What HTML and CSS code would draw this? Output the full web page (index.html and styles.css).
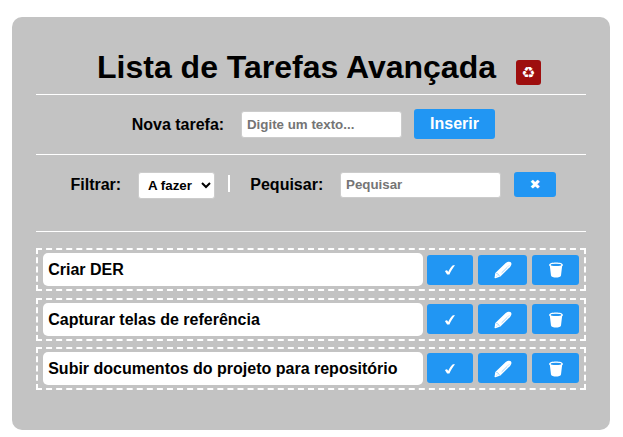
FILE: index.html
```html
<!DOCTYPE html>
<html lang="pt-BR">
<head>
<meta charset="utf-8">
<title>Lista de Tarefas Avançada</title>
<link rel="stylesheet" href="styles.css">
</head>
<body>
<svg class="sprite" width="0" height="0">
  <symbol id="pen" viewBox="0 0 18 18">
    <path d="M.5 16.900 1.300 11.900 11.700 2c1.900-1.600 4.200-1.700 5.100-.8 1 1 .9 2.900-.7 4.700L6.400 15.600 1.400 17.300z" fill="#fff"/>
    <path d="M2.300 12.400c1.500.2 2.700 1.300 3.100 2.900M7.600 11.900l5.800-5.700M14.100 5.500l1-1M2.300 15.500l.8-.8" fill="none" stroke="#2196f3" stroke-width=".45"/>
  </symbol>
  <symbol id="bin" viewBox="0 0 14 16">
    <path d="M.1 2.900C.1 1.200 3.200.4 7 .4s6.900.8 6.900 2.500c0 .6-.3 1-.8 1.300l-1.100 9.200c-.3 1.500-2.600 2-5 2s-4.700-.5-5-2L.9 4.200C.4 3.900.1 3.500.1 2.900z" fill="#fff"/>
    <ellipse cx="7" cy="2.900" rx="5.300" ry="1.100" fill="#2196f3"/>
  </symbol>
  <symbol id="check" viewBox="0 0 12 12">
    <path d="M1 7.300c.9-1.200 2.200-1.300 2.700-.3l.5.900C5.700 5 7.100 2.600 8.900 1.300h2.100C8.700 4.100 6.900 7.200 5.400 10.600H3.100z" fill="#fff"/>
  </symbol>
</svg>
<main class="container">
  <header class="heading">
    <h1>Lista de Tarefas Avançada</h1>
    <button class="btn recycle" aria-label="Limpar">♻</button>
  </header>
  <form class="new-task">
    <label for="task">Nova tarefa:</label>
    <input id="task" type="text" placeholder="Digite um texto...">
    <button class="btn insert" type="button">Inserir</button>
  </form>
  <section class="filters">
    <label for="filter">Filtrar:</label>
    <select id="filter"><option>A fazer</option></select>
    <span class="separator"></span>
    <label for="search">Pequisar:</label>
    <input id="search" type="text" placeholder="Pequisar">
    <button class="btn clear" aria-label="Limpar pesquisa">✖</button>
  </section>
  <ul class="tasks">
    <li class="task">
      <span class="name">Criar DER</span>
      <button class="btn check" aria-label="Concluir"><svg><use href="#check"/></svg></button>
      <button class="btn edit" aria-label="Editar"><svg><use href="#pen"/></svg></button>
      <button class="btn remove" aria-label="Excluir"><svg><use href="#bin"/></svg></button>
    </li>
    <li class="task">
      <span class="name">Capturar telas de referência</span>
      <button class="btn check" aria-label="Concluir"><svg><use href="#check"/></svg></button>
      <button class="btn edit" aria-label="Editar"><svg><use href="#pen"/></svg></button>
      <button class="btn remove" aria-label="Excluir"><svg><use href="#bin"/></svg></button>
    </li>
    <li class="task">
      <span class="name">Subir documentos do projeto para repositório</span>
      <button class="btn check" aria-label="Concluir"><svg><use href="#check"/></svg></button>
      <button class="btn edit" aria-label="Editar"><svg><use href="#pen"/></svg></button>
      <button class="btn remove" aria-label="Excluir"><svg><use href="#bin"/></svg></button>
    </li>
  </ul>
</main>
</body>
</html>
```
FILE: styles.css
```css
* { box-sizing: border-box; }

body {
  margin: 0;
  background: #fff;
  color: #000;
  font: bold 16px "Liberation Sans", Arial, sans-serif;
}

.sprite { display: block; }

.container {
  width: 598px;
  height: 413px;
  margin: 17px 0 0 12px;
  padding: 0 24px;
  border-radius: 10px;
  background: #c3c3c3;
}

.heading {
  display: flex;
  align-items: flex-start;
  height: 78px;
  padding-left: 61px;
  border-bottom: 1px solid #fff;
}

h1 {
  width: 399px;
  margin: 32px 20px 0 0;
  font-size: 32px;
  line-height: 37px;
  white-space: nowrap;
}

.btn {
  display: flex;
  align-items: center;
  justify-content: center;
  flex-shrink: 0;
  margin: 0;
  padding: 0;
  border: 0;
  border-radius: 3px;
  background: #2196f3;
  color: #fff;
  font: bold 16px "Liberation Sans", Arial, "DejaVu Sans", sans-serif;
}

.recycle {
  width: 25px;
  height: 25px;
  margin-top: 43px;
  background: #9e0e0e;
  font-size: 15.5px;
}

.new-task {
  display: flex;
  align-items: center;
  height: 60px;
  padding-left: 95.700px;
  border-bottom: 1px solid #fff;
}

label { flex-shrink: 0; white-space: nowrap; }

input, select {
  border: 1px solid #ccc;
  border-radius: 3px;
  background: #fff;
  color: #000;
  font: bold 13.333px "Liberation Sans", Arial, sans-serif;
}

input {
  width: 161px;
  height: 27px;
  padding: 0 5px;
}

.new-task label { width: 109.300px; }
.insert { width: 81px; height: 30px; margin: 0 0 1px 12px; }

.filters {
  display: flex;
  align-items: flex-start;
  height: 77px;
  padding: 17px 0 0 34px;
  border-bottom: 1px solid #fff;
}

.filters label { line-height: 26px; }
.filters label:first-child { width: 68px; padding-left: .5px; }
.filters label[for="search"] { width: 90px; padding-left: .3px; }
.filters input { height: 26px; padding-bottom: 1px; }

select {
  width: 77px;
  height: 27px;
  padding: 0 0 1px 5px;
}

.separator {
  width: 2px;
  height: 17px;
  margin: 3px 20px 0 13px;
  background: #fff;
}

.clear {
  width: 42px;
  height: 25px;
  margin-left: 13px;
  font-size: 13.333px;
}

.tasks {
  margin: 16px 0 0;
  padding: 0;
  list-style: none;
}

.task {
  display: flex;
  align-items: flex-start;
  height: 43px;
  margin-bottom: 6px;
  padding: 3px 5px;
  border: 2px dashed #fff;
}

.task:first-child { margin-bottom: 7px; }

.name {
  width: 380px;
  height: 33px;
  margin-right: 4px;
  padding-left: 5.2px;
  border-radius: 5px;
  background: #fff;
  line-height: 33px;
  white-space: nowrap;
}

.task .btn { height: 30px; margin-top: 1px; padding-top: 2px; }
.task:first-child .btn { margin-top: 2px; padding-top: 0; }
.task .check { width: 46px; margin-right: 5px; }
.task .edit { width: 49px; margin-right: 5px; }
.task .remove { width: 47px; }
.check svg { width: 12px; height: 12px; }
.edit svg { width: 18px; height: 18px; }
.remove svg { width: 14px; height: 16px; }
```
